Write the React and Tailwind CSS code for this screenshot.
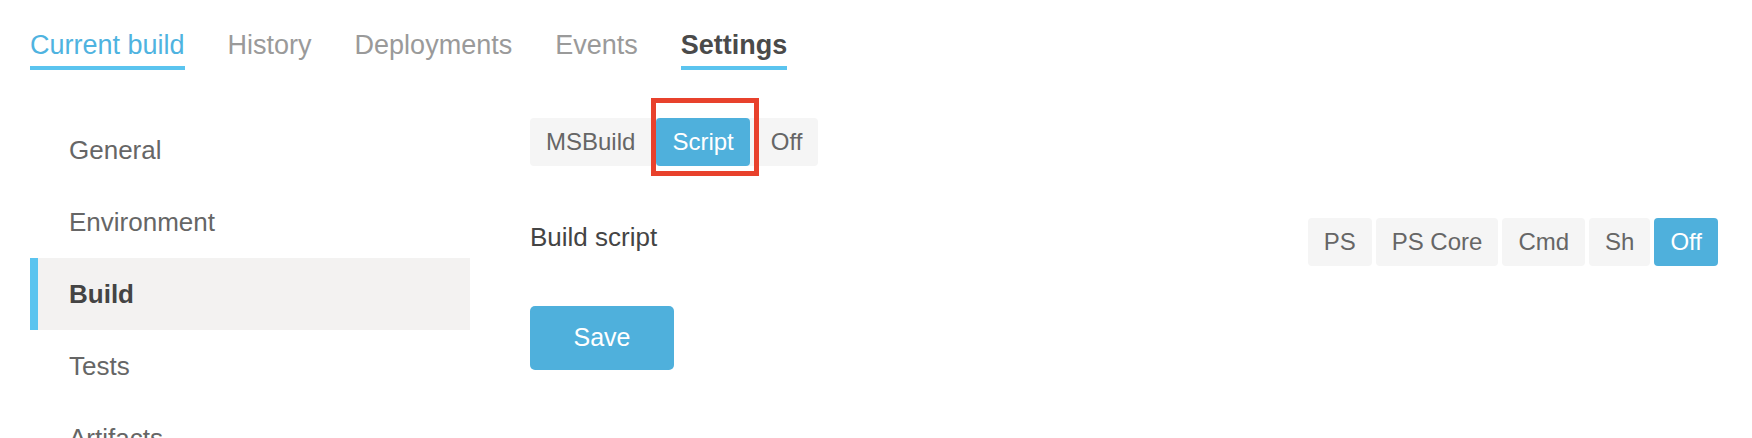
import { useState } from 'react';

const tabs = ['Current build', 'History', 'Deployments', 'Events', 'Settings'];
const menu = ['General', 'Environment', 'Build', 'Tests', 'Artifacts'];
const scriptTypes = ['PS', 'PS Core', 'Cmd', 'Sh', 'Off'];

const App = () => {
  const [mode, setMode] = useState('Script');
  const [scriptType, setScriptType] = useState('Off');

  return (
    <div className="w-[1752px] h-[438px] overflow-hidden bg-white font-['Liberation_Sans',Arial,sans-serif]">
      <div className="flex gap-[43px] pl-[30px] pt-[32px]">
        {tabs.map((tab) => {
          const underline = tab === 'Current build' || tab === 'Settings';
          let color = 'text-[#9a9a9a]';
          if (tab === 'Current build') color = 'text-[#4fb3e0]';
          if (tab === 'Settings') color = 'text-[#4a4a4a] font-bold';
          return (
            <div
              key={tab}
              className={`text-[27px] leading-[27px] pb-[7px] border-b-4 ${color} ${
                underline ? 'border-[#5bc4ef]' : 'border-transparent'
              }`}
            >
              {tab}
            </div>
          );
        })}
      </div>

      <div className="flex pl-[30px] pt-[44px]">
        <div className="w-[440px] shrink-0">
          {menu.map((item) => {
            const active = item === 'Build';
            return (
              <div
                key={item}
                className={`h-[72px] flex items-center pl-[31px] border-l-8 text-[26px] ${
                  active
                    ? 'bg-[#f3f2f1] border-[#5bc4ef] text-[#444] font-bold'
                    : 'border-transparent text-[#666]'
                }`}
              >
                {item}
              </div>
            );
          })}
        </div>

        <div className="flex-1 ml-[60px] pr-[34px] pt-[4px]">
          <div className="inline-flex gap-[5px] bg-[#f5f5f5] rounded-[4px]">
            {['MSBuild', 'Script', 'Off'].map((m) => (
              <div key={m} className="relative">
                <button
                  onClick={() => setMode(m)}
                  className={`h-[48px] px-4 text-[24px] leading-none rounded-[4px] ${
                    mode === m ? 'bg-[#4fb0dc] text-white' : 'text-[#666]'
                  }`}
                >
                  {m}
                </button>
                {m === 'Script' && (
                  <div className="absolute left-[-5px] right-[-9px] top-[-20px] bottom-[-10px] border-[5px] border-[#e8412c] pointer-events-none" />
                )}
              </div>
            ))}
          </div>

          <div className="flex items-start justify-between mt-[52px]">
            <div className="mt-[6px] text-[26px] leading-[26px] text-[#444]">Build script</div>
            <div className="flex gap-1">
              {scriptTypes.map((t) => (
                <button
                  key={t}
                  onClick={() => setScriptType(t)}
                  className={`h-[48px] px-4 text-[24px] leading-none rounded-[4px] ${
                    scriptType === t ? 'bg-[#4fb0dc] text-white' : 'bg-[#f5f5f5] text-[#666]'
                  }`}
                >
                  {t}
                </button>
              ))}
            </div>
          </div>

          <button className="mt-[40px] w-[144px] h-[64px] rounded-[5px] bg-[#4fb0dc] text-white text-[25px]">
            Save
          </button>
        </div>
      </div>
    </div>
  );
};

export default App;
